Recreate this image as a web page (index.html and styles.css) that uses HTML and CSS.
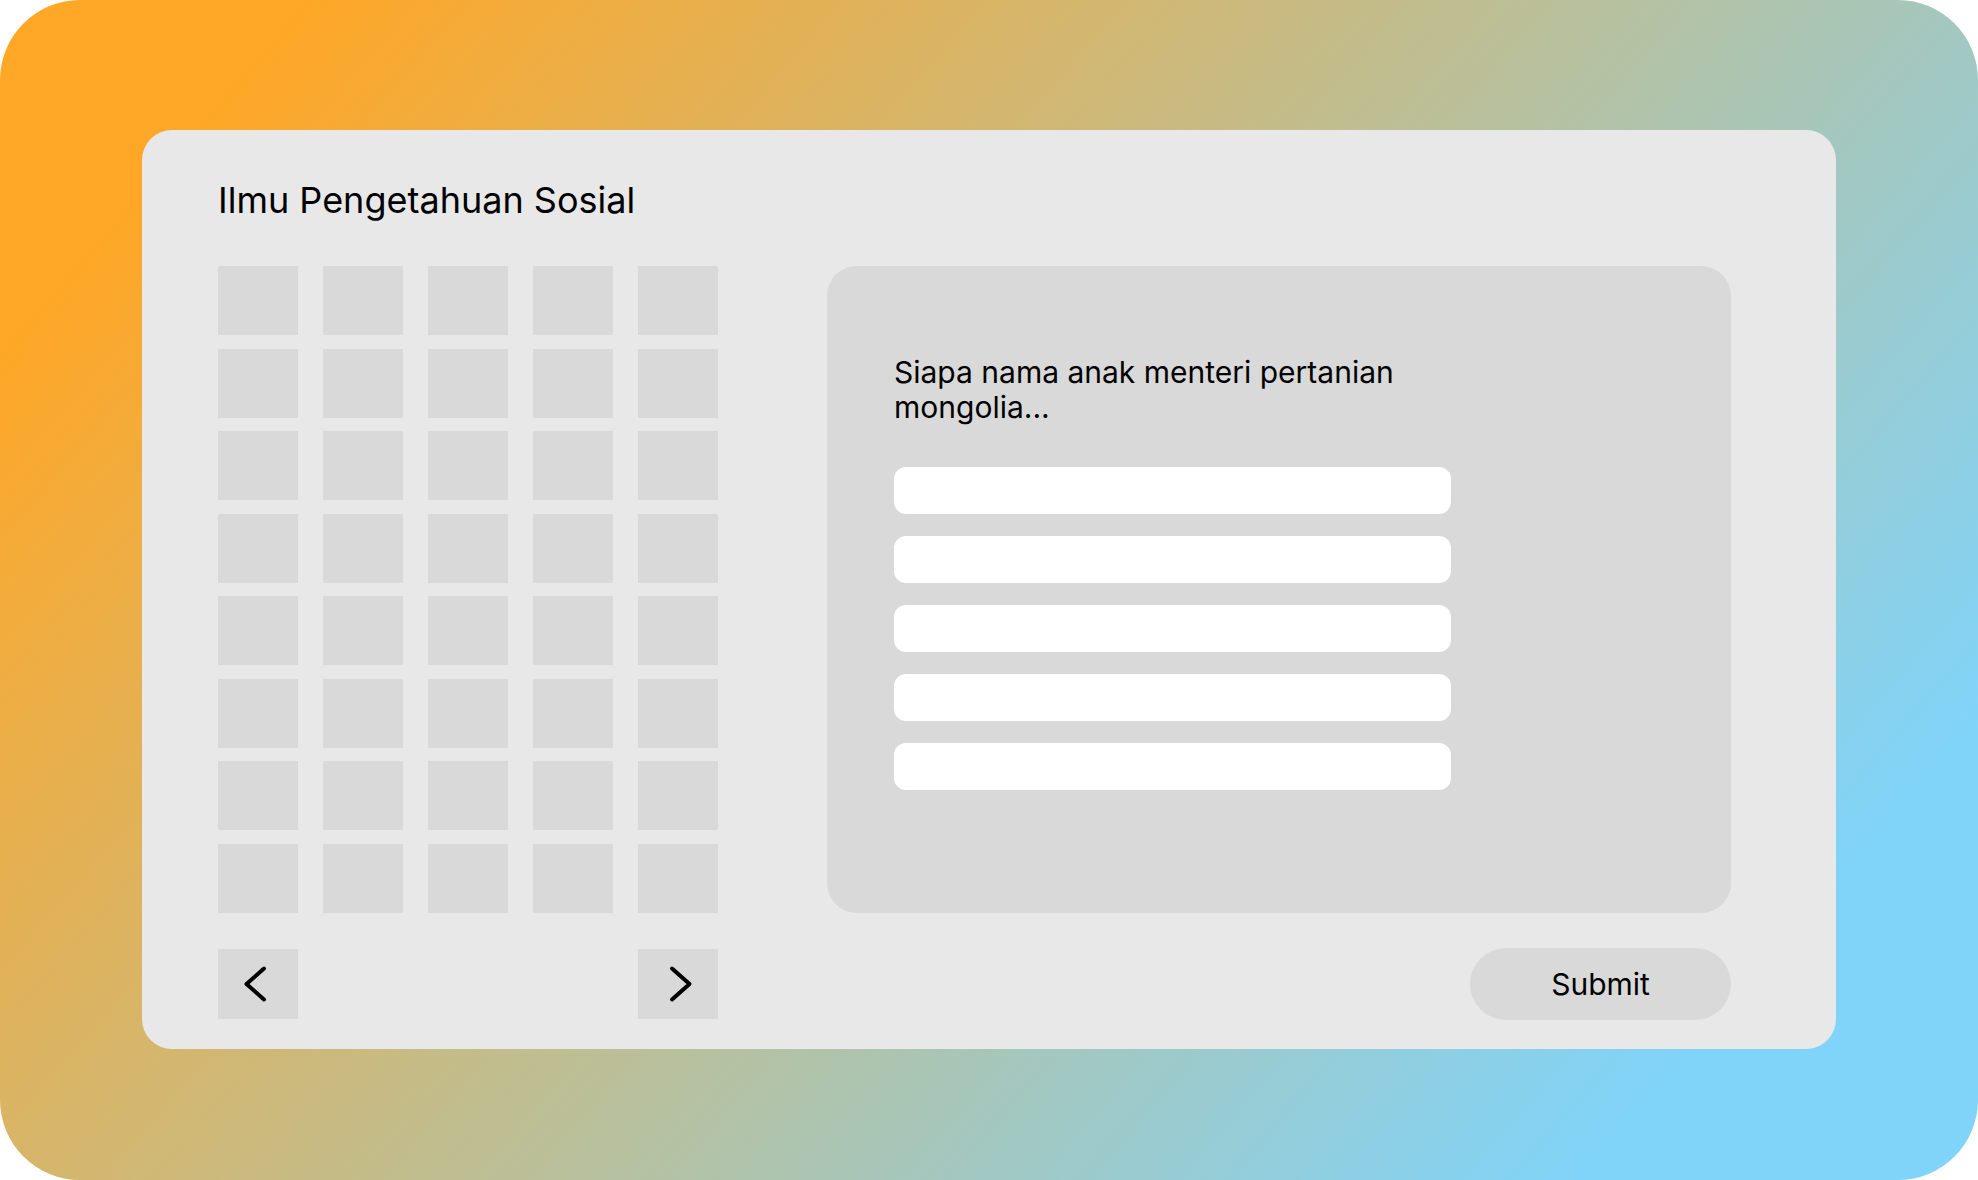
FILE: index.html
```html
<!DOCTYPE html>
<html lang="id">
<head>
<meta charset="utf-8">
<title>Ilmu Pengetahuan Sosial</title>
<link rel="stylesheet" href="styles.css">
</head>
<body>
<div class="screen">
  <section class="card">
    <h1 class="title">Ilmu Pengetahuan Sosial</h1>
    <div class="content">
      <div class="numbers">
        <div class="cell"></div><div class="cell"></div><div class="cell"></div><div class="cell"></div><div class="cell"></div>
        <div class="cell"></div><div class="cell"></div><div class="cell"></div><div class="cell"></div><div class="cell"></div>
        <div class="cell"></div><div class="cell"></div><div class="cell"></div><div class="cell"></div><div class="cell"></div>
        <div class="cell"></div><div class="cell"></div><div class="cell"></div><div class="cell"></div><div class="cell"></div>
        <div class="cell"></div><div class="cell"></div><div class="cell"></div><div class="cell"></div><div class="cell"></div>
        <div class="cell"></div><div class="cell"></div><div class="cell"></div><div class="cell"></div><div class="cell"></div>
        <div class="cell"></div><div class="cell"></div><div class="cell"></div><div class="cell"></div><div class="cell"></div>
        <div class="cell"></div><div class="cell"></div><div class="cell"></div><div class="cell"></div><div class="cell"></div>
      </div>
      <div class="panel">
        <div class="panel-inner">
          <p class="question">Siapa nama anak menteri pertanian mongolia...</p>
          <div class="options">
            <div class="option"></div>
            <div class="option"></div>
            <div class="option"></div>
            <div class="option"></div>
            <div class="option"></div>
          </div>
        </div>
      </div>
    </div>
    <div class="footer">
      <div class="nav">
        <button class="nav-btn" aria-label="Sebelumnya">
          <svg width="80" height="70" viewBox="0 0 80 70"><path d="M46 19.5 L28.5 35 L46 50.5" fill="none" stroke="#000" stroke-width="4" stroke-linecap="round" stroke-linejoin="round"/></svg>
        </button>
        <button class="nav-btn" aria-label="Berikutnya">
          <svg width="80" height="70" viewBox="0 0 80 70"><path d="M34 19.5 L51.5 35 L34 50.5" fill="none" stroke="#000" stroke-width="4" stroke-linecap="round" stroke-linejoin="round"/></svg>
        </button>
      </div>
      <button class="submit">Submit</button>
    </div>
  </section>
</div>
</body>
</html>
```

FILE: styles.css
```css
* { box-sizing: border-box; }

html, body {
  margin: 0;
  padding: 0;
  background: #ffffff;
}

body {
  font-family: Inter, "Noto Sans", "Liberation Sans", sans-serif;
  color: #000;
}

.screen {
  width: 1978px;
  height: 1180px;
  border-radius: 80px;
  background: linear-gradient(131deg, #FFA726 10%, #80D4FA 87%);
  padding: 130px 142px 0 142px;
}

.card {
  width: 1694px;
  height: 919px;
  background: #E8E8E8;
  border-radius: 30px;
  padding: 48px 105px 29px 76px;
  display: flex;
  flex-direction: column;
}

.title {
  margin: 0 0 44px 0;
  font-size: 36px;
  line-height: 44px;
  font-weight: 400;
}

.content {
  display: flex;
  gap: 109px;
  align-items: stretch;
}

.numbers {
  display: grid;
  grid-template-columns: repeat(5, 80px);
  grid-template-rows: repeat(8, 69px);
  column-gap: 25px;
  row-gap: 13.5px;
  flex: none;
}

.cell {
  background: #D9D9D9;
}

.panel {
  flex: 1;
  background: #D9D9D9;
  border-radius: 30px;
  padding: 89px 0 0 67px;
}

.panel-inner {
  width: 557px;
}

.question {
  margin: 0 0 42px 0;
  font-size: 30px;
  line-height: 35px;
  font-weight: 400;
}

.options {
  display: flex;
  flex-direction: column;
  gap: 22px;
}

.option {
  height: 47px;
  background: #ffffff;
  border-radius: 12px;
}

.footer {
  margin-top: 35px;
  height: 72px;
  display: flex;
  align-items: center;
  justify-content: space-between;
}

.nav {
  width: 500px;
  display: flex;
  justify-content: space-between;
}

.nav-btn {
  width: 80px;
  height: 70px;
  padding: 0;
  border: 0;
  background: #D9D9D9;
  display: block;
}

.nav-btn svg { display: block; }

.submit {
  width: 261px;
  height: 72px;
  border: 0;
  border-radius: 36px;
  background: #D9D9D9;
  font-family: Inter, "Noto Sans", "Liberation Sans", sans-serif;
  font-size: 30px;
  color: #000;
  padding: 0;
}
```
